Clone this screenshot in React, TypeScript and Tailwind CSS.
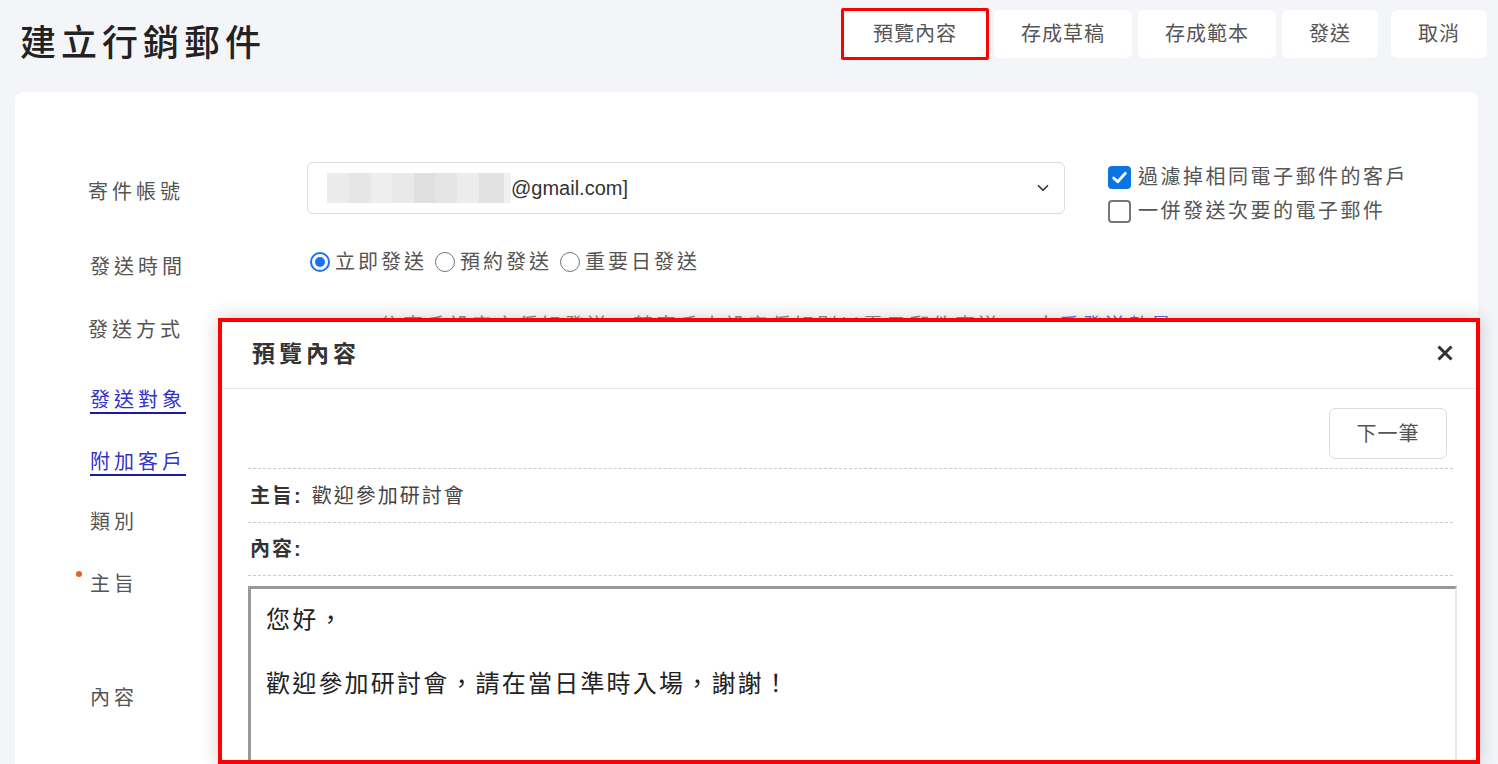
import React from "react";
import { ChevronDown } from "lucide-react";

const FONT = "font-['Liberation_Sans','Noto_Sans_CJK_TC',sans-serif]";

function TopButton({ label, wide = false, tall = false }: { label: string; wide?: boolean; tall?: boolean }) {
  return (
    <button
      className={
        "rounded-[6px] bg-white text-[20px] leading-[24px] tracking-[1px] text-[#555] " +
        (wide ? "px-[29px] " : "px-[27px] ") +
        (tall ? "h-[46px]" : "h-[48px]")
      }
    >
      {label}
    </button>
  );
}

function Radio({ checked, label }: { checked?: boolean; label: string }) {
  return (
    <label className="flex items-center">
      {checked ? (
        <span className="w-[20px] h-[20px] rounded-full border-[2px] border-[#1a73e8] flex items-center justify-center">
          <span className="w-[10px] h-[10px] rounded-full bg-[#1a73e8]" />
        </span>
      ) : (
        <span className="w-[20px] h-[20px] rounded-full border-[1.5px] border-[#767676] bg-white" />
      )}
      <span className="ml-[5px] tracking-[3px]">{label}</span>
    </label>
  );
}

function Checkbox({ checked, label }: { checked?: boolean; label: string }) {
  return (
    <label className="flex items-center h-[34px]">
      {checked ? (
        <span className="w-[23px] h-[23px] rounded-[4px] bg-[#0b74e5] flex items-center justify-center">
          <svg width="17" height="17" viewBox="0 0 16 16">
            <path d="M2.5 8.5 L6.3 12 L13.5 4" fill="none" stroke="white" strokeWidth="2.6" strokeLinecap="round" strokeLinejoin="round" />
          </svg>
        </span>
      ) : (
        <span className="w-[23px] h-[23px] rounded-[4px] border-[2px] border-[#767676] bg-white" />
      )}
      <span className="ml-[7px] tracking-[2.5px] text-[#555]">{label}</span>
    </label>
  );
}

export default function App() {
  return (
    <div className={"relative w-[1498px] h-[764px] overflow-hidden bg-[#f4f5f9] " + FONT}>
      <header className="flex items-start justify-between h-[92px]">
        <h1 className="ml-[20px] mt-[21px] text-[36px] leading-[46px] tracking-[5px] text-[#222] font-medium">
          建立行銷郵件
        </h1>
        <div className="flex items-center h-[52px] mt-[8px] mr-[11px]">
          <div className="h-[52px] border-[3px] border-[#ff0000] rounded-[2px] flex items-center">
            <TopButton label="預覽內容" wide tall />
          </div>
          <div className="ml-[5px]"><TopButton label="存成草稿" /></div>
          <div className="ml-[6px]"><TopButton label="存成範本" /></div>
          <div className="ml-[6px]"><TopButton label="發送" /></div>
          <div className="ml-[13px]"><TopButton label="取消" /></div>
        </div>
      </header>

      <main className="ml-[15px] w-[1463px] h-[700px] rounded-[8px] bg-white pt-[70px] pl-[73px] text-[20px] text-[#555]">
        {/* row 1 */}
        <div className="flex items-start h-[52px]">
          <div className="w-[219px] h-[52px] flex items-center pt-[8px] tracking-[4px]">寄件帳號</div>
          <div className="w-[758px] h-[52px] rounded-[6px] border border-[#dcdcdc] flex items-center pl-[19px] pr-[12px]">
            <div className="flex h-[30px] w-[184px]">
              <div className="w-[22px] bg-[#ebebeb]" />
              <div className="w-[22px] bg-[#e6e6e6]" />
              <div className="w-[21px] bg-[#eeeeee]" />
              <div className="w-[22px] bg-[#e9e9e9]" />
              <div className="w-[21px] bg-[#e0e0e0]" />
              <div className="w-[22px] bg-[#e4e4e4]" />
              <div className="w-[22px] bg-[#ececec]" />
              <div className="w-[25px] bg-[#e2e2e2]" />
              <div className="w-[7px] bg-[#f1f1f1]" />
            </div>
            <span className="text-[#333] text-[20px]">@gmail.com]</span>
            <span className="flex-1" />
            <ChevronDown size={18} strokeWidth={2.2} className="text-[#333]" />
          </div>
          <div className="ml-[43px] -mt-[2px] flex flex-col">
            <Checkbox checked label="過濾掉相同電子郵件的客戶" />
            <Checkbox label="一併發送次要的電子郵件" />
          </div>
        </div>

        {/* row 2 */}
        <div className="flex items-start mt-[36px] leading-[24px]">
          <div className="w-[219px] mt-[5px] tracking-[4px] pl-[2px]">發送時間</div>
          <div className="flex items-center gap-[8px] pl-[3px]">
            <Radio checked label="立即發送" />
            <Radio label="預約發送" />
            <Radio label="重要日發送" />
          </div>
        </div>

        {/* row 3 */}
        <div className="flex items-start mt-[32px]">
          <div className="w-[219px] mt-[7px] leading-[24px] tracking-[4px]">發送方式</div>
          <div className="ml-[73px] mt-[5px] leading-[20px] tracking-[3px] whitespace-nowrap">
            <span className="text-[#8a8a8a]">依客戶設定之偏好發送，若客戶未設定偏好則以電子郵件寄送，</span>
            <span className="ml-[12px] text-[#5a70d8]">查看發送數量</span>
          </div>
        </div>

        {/* label rows */}
        <div className="mt-[46px] leading-[24px] tracking-[4px] pl-[2px]">
          <a className="text-[#3333cc] underline decoration-[#1a1aa6] underline-offset-[5px]">發送對象</a>
        </div>
        <div className="mt-[38px] leading-[24px] tracking-[4px] pl-[2px]">
          <a className="text-[#3333cc] underline decoration-[#1a1aa6] underline-offset-[5px]">附加客戶</a>
        </div>
        <div className="mt-[36px] leading-[24px] tracking-[4px] pl-[2px]">類別</div>
        <div className="relative mt-[38px] leading-[24px] tracking-[4px] pl-[2px]">
          <span className="absolute -left-[12px] top-[-1px] w-[6px] h-[6px] rounded-full bg-[#e8641c]" />
          主旨
        </div>
        <div className="mt-[90px] leading-[24px] tracking-[4px] pl-[2px]">內容</div>
      </main>

      {/* preview modal */}
      <div className="absolute left-[218px] top-[318px] w-[1262px] h-[446px] border-[4px] border-[#ff0000] bg-white overflow-hidden shadow-[0_0_18px_rgba(0,0,0,0.18)]">
        <div className="h-[67px] border-b border-[#e9e9e9] flex items-center justify-between pl-[30px] pr-[23px]">
          <span className="text-[23px] font-bold tracking-[4px] text-[#333] -mt-[2px]">預覽內容</span>
          <svg width="16" height="16" viewBox="0 0 16 16" className="-mt-[4px]">
            <path d="M1.5 1.5 L14.5 14.5 M14.5 1.5 L1.5 14.5" stroke="#333" strokeWidth="3" />
          </svg>
        </div>
        <div className="pl-[26px] pr-[23px] pt-[19px]">
          <div className="flex justify-end pr-[6px]">
            <button className="h-[51px] w-[118px] rounded-[6px] border border-[#dcdcdc] text-[20px] tracking-[1px] text-[#555]">
              下一筆
            </button>
          </div>
          <div className="mt-[9px] border-t border-dashed border-[#cccccc]" />
          <div className="h-[53px] flex items-center pl-[2px] text-[20px] tracking-[2px]">
            <span className="font-bold text-[#333]">主旨:</span>
            <span className="ml-[9px] text-[#444]">歡迎參加研討會</span>
          </div>
          <div className="border-t border-dashed border-[#cccccc]" />
          <div className="h-[52px] flex items-center pl-[2px] text-[20px] tracking-[2px]">
            <span className="font-bold text-[#333]">內容:</span>
          </div>
          <div className="border-t border-dashed border-[#cccccc]" />
          <div className="mt-[10px] -mr-[4px] h-[200px] border-t-[3px] border-l-[3px] border-r-[2px] border-t-[#999] border-l-[#999] border-r-[#e6e6e6] px-[15px] pt-[15px] text-[24px] leading-[32px] tracking-[2.2px] text-[#222]">
            <p>您好，</p>
            <p>&nbsp;</p>
            <p>歡迎參加研討會，請在當日準時入場，謝謝！</p>
          </div>
        </div>
      </div>
    </div>
  );
}
